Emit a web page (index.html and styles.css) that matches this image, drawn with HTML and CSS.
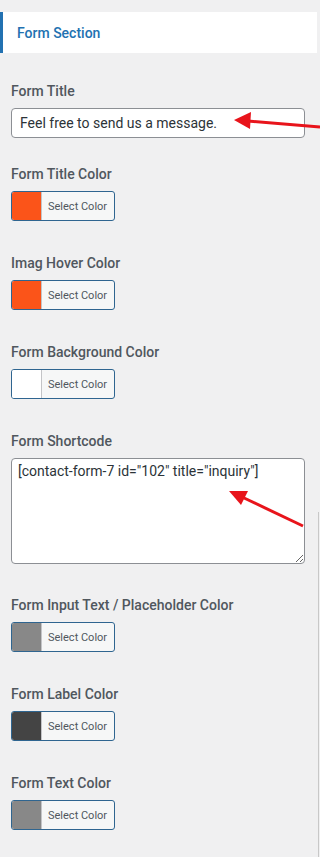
FILE: index.html
```html
<!DOCTYPE html>
<html>
<head>
<meta charset="utf-8">
<link rel="stylesheet" href="styles.css">
</head>
<body>
<div class="panel">
  <div class="section-head">Form Section</div>
  <div class="fields">
    <div class="field field-text">
      <label class="label">Form Title</label>
      <input class="text-input" type="text" value="Feel free to send us a message.">
    </div>
    <div class="field">
      <label class="label">Form Title Color</label>
      <button class="color-btn"><span class="swatch swatch-orange"></span><span class="btn-text">Select Color</span></button>
    </div>
    <div class="field">
      <label class="label">Imag Hover Color</label>
      <button class="color-btn"><span class="swatch swatch-orange"></span><span class="btn-text">Select Color</span></button>
    </div>
    <div class="field">
      <label class="label">Form Background Color</label>
      <button class="color-btn"><span class="swatch swatch-white"></span><span class="btn-text">Select Color</span></button>
    </div>
    <div class="field">
      <label class="label">Form Shortcode</label>
      <textarea class="textarea">[contact-form-7 id="102" title="inquiry"]</textarea>
    </div>
    <div class="field">
      <label class="label">Form Input Text / Placeholder Color</label>
      <button class="color-btn"><span class="swatch swatch-grey"></span><span class="btn-text">Select Color</span></button>
    </div>
    <div class="field">
      <label class="label">Form Label Color</label>
      <button class="color-btn"><span class="swatch swatch-dark"></span><span class="btn-text">Select Color</span></button>
    </div>
    <div class="field">
      <label class="label">Form Text Color</label>
      <button class="color-btn"><span class="swatch swatch-grey"></span><span class="btn-text">Select Color</span></button>
    </div>
  </div>
  <div class="scroll-edge"></div>
  <svg class="arrow arrow-1" width="320" height="857" viewBox="0 0 320 857">
    <line x1="320" y1="127" x2="248" y2="121" stroke="#e8141b" stroke-width="3"/>
    <polygon points="234,120 251,112 250,129" fill="#e8141b"/>
    <line x1="303" y1="526" x2="242" y2="497" stroke="#e8141b" stroke-width="3"/>
    <polygon points="229,491 248,491 241,505" fill="#e8141b"/>
  </svg>
</div>
</body>
</html>
```
FILE: styles.css
```css
* { box-sizing: border-box; }
html, body {
  margin: 0;
  padding: 0;
  background: #f0f0f1;
  font-family: Roboto, "Noto Sans", sans-serif;
}
.panel {
  position: relative;
  width: 320px;
  min-height: 857px;
  padding-top: 12px;
}
.section-head {
  width: 317px;
  height: 41px;
  background: #fff;
  border-left: 3px solid #2271b1;
  padding-left: 14px;
  display: flex;
  align-items: center;
  font-size: 14px;
  font-weight: 500;
  color: #2271b1;
}
.fields {
  display: flex;
  flex-direction: column;
  padding: 28px 0 0 11px;
}
.field {
  display: flex;
  flex-direction: column;
  align-items: flex-start;
  gap: 7px;
  margin-bottom: 32px;
}
.field-text { margin-bottom: 26px; }
.label {
  font-size: 14px;
  line-height: 20px;
  font-weight: 500;
  color: #50575e;
}
.text-input {
  width: 294px;
  height: 30px;
  border: 1px solid #8c8f94;
  border-radius: 4px;
  background: #fff;
  padding: 0 8px;
  font-family: Roboto, sans-serif;
  font-size: 14px;
  color: #2c3338;
}
.textarea {
  width: 294px;
  height: 106px;
  border: 1px solid #8c8f94;
  border-radius: 4px;
  background: #fff;
  padding: 2px 6px;
  font-family: Roboto, sans-serif;
  font-size: 14px;
  line-height: 20px;
  color: #2c3338;
  resize: vertical;
  margin-bottom: -1px;
}
.color-btn {
  display: flex;
  align-items: stretch;
  width: 104px;
  height: 30px;
  padding: 0;
  border: 1px solid #2f6590;
  border-radius: 3px;
  background: #f6f7f7;
  overflow: hidden;
  font-family: Roboto, sans-serif;
}
.swatch {
  width: 30px;
  border-right: 1px solid #c3c4c7;
}
.swatch-orange { background: #fb5419; }
.swatch-white { background: #fff; }
.swatch-grey { background: #888888; }
.swatch-dark { background: #444444; }
.btn-text {
  display: flex;
  align-items: center;
  padding-left: 6px;
  font-size: 11px;
  color: #50575e;
}
.scroll-edge {
  position: absolute;
  right: 0;
  top: 512px;
  bottom: 0;
  width: 2px;
  border-left: 1px solid #c8c8c8;
  background: #f0f0f1;
}
.arrow {
  position: absolute;
  left: 0;
  top: 0;
  pointer-events: none;
}
```
